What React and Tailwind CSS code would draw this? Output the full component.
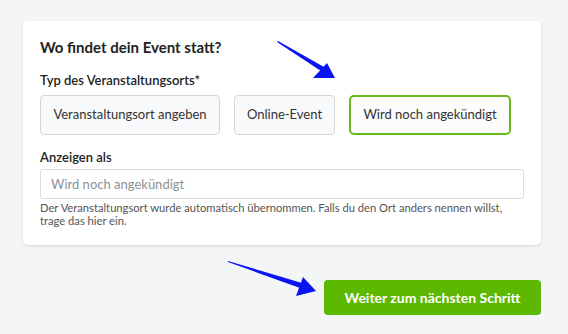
export default function App() {
  return (
    <div className="relative h-[334px] w-[568px] overflow-hidden bg-[#f4f5f7] pl-[23px] pt-[21px] font-['Lato',sans-serif] text-[#222]">
      <div className="w-[518px] rounded-[5px] bg-white px-[17px] pb-[18px] pt-[14px] shadow-[0_1px_3px_rgba(0,0,0,0.12)]">
        <h2 className="text-[15px] font-bold leading-[24px]">Wo findet dein Event statt?</h2>
        <div className="mt-[12px] text-[13px] font-semibold leading-[18px]">Typ des Veranstaltungsorts*</div>
        <div className="mt-[6px] flex gap-[14px]">
          <button className="h-[40px] w-[180px] rounded-[4px] border border-[#d3d7dc] bg-[#f8f9fa] text-[13px] text-[#333]">
            Veranstaltungsort angeben
          </button>
          <button className="h-[40px] w-[101px] rounded-[4px] border border-[#d3d7dc] bg-[#f8f9fa] text-[13px] text-[#333]">
            Online-Event
          </button>
          <button className="h-[40px] w-[162px] rounded-[5px] border-2 border-[#66bb17] bg-[#fbfcfb] text-[13px] text-[#333]">
            Wird noch angekündigt
          </button>
        </div>
        <div className="mt-[13px] text-[13px] font-semibold leading-[18px]">Anzeigen als</div>
        <input
          className="mt-[3px] h-[30px] w-[484px] rounded-[3px] border border-[#d8dbe0] bg-white px-[10px] text-[13px] outline-none placeholder:text-[#8c9197]"
          placeholder="Wird noch angekündigt"
        />
        <p className="mt-[2px] text-[11.2px] leading-[13px] text-[#555]">
          Der Veranstaltungsort wurde automatisch übernommen. Falls du den Ort anders nennen willst,
          <br />
          trage das hier ein.
        </p>
      </div>
      <div className="mt-[35px] flex w-[518px] justify-end">
        <button className="h-[35px] w-[217px] rounded-[4px] bg-[#5cb800] text-[14px] font-bold text-white">
          Weiter zum nächsten Schritt
        </button>
      </div>
      <svg className="pointer-events-none absolute left-0 top-0" width="568" height="334">
        <polygon points="278,41 324,67 321,71 277,42" fill="#0a14f0" />
        <polygon points="335,78 313,78 327,63" fill="#0a14f0" />
        <polygon points="228,261 302,283 300,288 228,262" fill="#0a14f0" />
        <polygon points="316,291 296,296 303,277" fill="#0a14f0" />
      </svg>
    </div>
  );
}
